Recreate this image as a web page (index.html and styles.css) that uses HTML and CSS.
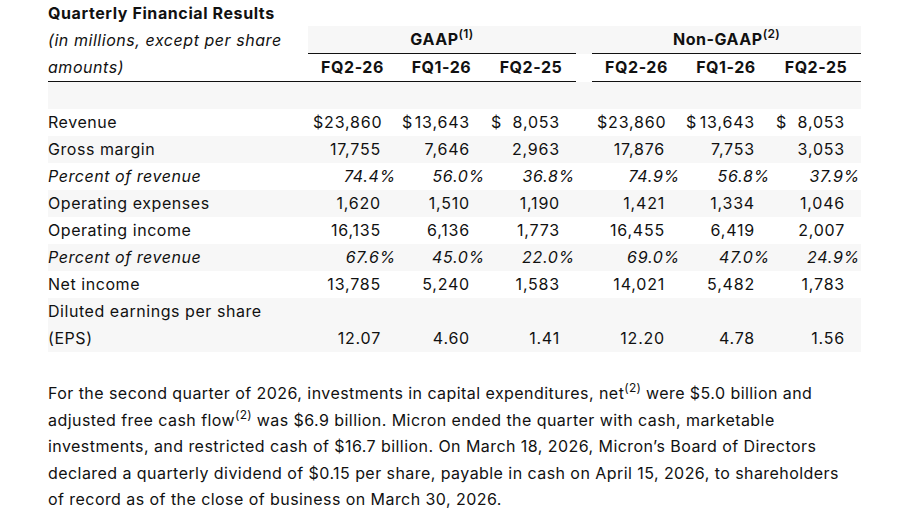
FILE: index.html
```html
<!DOCTYPE html>
<html lang="en">
<head>
<meta charset="utf-8">
<title>Quarterly Financial Results</title>
<link rel="stylesheet" href="styles.css">
</head>
<body>
<main class="page">
  <table class="fin">
    <colgroup>
      <col class="c-label">
      <col class="c-num"><col class="c-num"><col class="c-num2">
      <col class="c-gap">
      <col class="c-num"><col class="c-num2"><col class="c-num2">
    </colgroup>
    <thead>
      <tr class="title-row">
        <th class="title" colspan="8">Quarterly Financial Results</th>
      </tr>
      <tr class="group-row">
        <th class="units" rowspan="2">(in millions, except per share amounts)</th>
        <th class="group" colspan="3">GAAP<sup>(1)</sup></th>
        <th class="gap"></th>
        <th class="group" colspan="3">Non-GAAP<sup>(2)</sup></th>
      </tr>
      <tr class="period-row">
        <th class="period">FQ2-26</th>
        <th class="period">FQ1-26</th>
        <th class="period">FQ2-25</th>
        <th class="gap plain"></th>
        <th class="period">FQ2-26</th>
        <th class="period">FQ1-26</th>
        <th class="period">FQ2-25</th>
      </tr>
    </thead>
    <tbody>
      <tr class="shade spacer-row"><td colspan="8"></td></tr>
      <tr>
        <td class="label">Revenue</td>
        <td class="num dollar"><span class="cur">$</span>23,860</td>
        <td class="num dollar"><span class="cur">$</span>13,643</td>
        <td class="num dollar"><span class="cur">$</span>8,053</td>
        <td class="gap"></td>
        <td class="num dollar"><span class="cur">$</span>23,860</td>
        <td class="num dollar"><span class="cur">$</span>13,643</td>
        <td class="num dollar"><span class="cur">$</span>8,053</td>
      </tr>
      <tr class="shade">
        <td class="label">Gross margin</td>
        <td class="num">17,755</td><td class="num">7,646</td><td class="num">2,963</td>
        <td class="gap"></td>
        <td class="num">17,876</td><td class="num">7,753</td><td class="num">3,053</td>
      </tr>
      <tr class="pct-row">
        <td class="label">Percent of revenue</td>
        <td class="pct">74.4%</td><td class="pct">56.0%</td><td class="pct">36.8%</td>
        <td class="gap"></td>
        <td class="pct">74.9%</td><td class="pct">56.8%</td><td class="pct">37.9%</td>
      </tr>
      <tr class="shade">
        <td class="label">Operating expenses</td>
        <td class="num">1,620</td><td class="num">1,510</td><td class="num">1,190</td>
        <td class="gap"></td>
        <td class="num">1,421</td><td class="num">1,334</td><td class="num">1,046</td>
      </tr>
      <tr>
        <td class="label">Operating income</td>
        <td class="num">16,135</td><td class="num">6,136</td><td class="num">1,773</td>
        <td class="gap"></td>
        <td class="num">16,455</td><td class="num">6,419</td><td class="num">2,007</td>
      </tr>
      <tr class="shade pct-row">
        <td class="label">Percent of revenue</td>
        <td class="pct">67.6%</td><td class="pct">45.0%</td><td class="pct">22.0%</td>
        <td class="gap"></td>
        <td class="pct">69.0%</td><td class="pct">47.0%</td><td class="pct">24.9%</td>
      </tr>
      <tr>
        <td class="label">Net income</td>
        <td class="num">13,785</td><td class="num">5,240</td><td class="num">1,583</td>
        <td class="gap"></td>
        <td class="num">14,021</td><td class="num">5,482</td><td class="num">1,783</td>
      </tr>
      <tr class="shade eps-row">
        <td class="label">Diluted earnings per share (EPS)</td>
        <td class="num">12.07</td><td class="num">4.60</td><td class="num">1.41</td>
        <td class="gap"></td>
        <td class="num">12.20</td><td class="num">4.78</td><td class="num">1.56</td>
      </tr>
    </tbody>
  </table>

  <p class="summary">For the second quarter of 2026, investments in capital expenditures, net<sup>(2)</sup> were $5.0 billion and adjusted free cash flow<sup>(2)</sup> was $6.9 billion. Micron ended the quarter with cash, marketable investments, and restricted cash of $16.7 billion. On March 18, 2026, Micron’s Board of Directors declared a quarterly dividend of $0.15 per share, payable in cash on April 15, 2026, to shareholders of record as of the close of business on March 30, 2026.</p>
</main>
</body>
</html>
```

FILE: styles.css
```css
html, body {
  margin: 0;
  padding: 0;
  background: #ffffff;
}

body {
  font-family: Inter, "Noto Sans", "Liberation Sans", sans-serif;
  font-size: 16px;
  color: #111111;
}

.page {
  padding-left: 48px;
  width: 814px;
}

.fin {
  width: 813px;
  table-layout: fixed;
  border-collapse: collapse;
  border-spacing: 0;
  letter-spacing: 0.55px;
}

.c-label { width: 260px; }
.c-num { width: 89px; }
.c-num2 { width: 90px; }
.c-gap { width: 16px; }

.fin th,
.fin td {
  padding: 0;
  line-height: 27px;
  height: 27px;
  vertical-align: middle;
  white-space: nowrap;
}

.title-row th {
  height: 26px;
  line-height: 26px;
}

.title {
  text-align: left;
  font-weight: 700;
  letter-spacing: 0.6px;
}

.units {
  text-align: left;
  font-style: italic;
  font-weight: 400;
  white-space: normal !important;
  border-bottom: 1px solid #111;
  padding-right: 20px !important;
  vertical-align: top;
}

.group-row .group,
.group-row .gap {
  background: #f7f7f7;
}

.group {
  font-weight: 700;
  text-align: center;
  border-bottom: 1px solid #111;
}

.fin sup {
  font-size: 12px;
  font-weight: 600;
  line-height: 0;
  vertical-align: 7px;
  letter-spacing: 0.3px;
}

.period {
  font-weight: 700;
  text-align: center;
  border-bottom: 1px solid #111;
}

.gap.plain {
  background: #ffffff;
}

.shade td {
  background: #f7f7f7;
}

.label {
  text-align: left;
}

.pct-row td {
  font-style: italic;
}

.num {
  text-align: right;
  padding-right: 16px !important;
  letter-spacing: 0.8px;
}

.cur {
  float: left;
  padding-left: 5px;
}

.pct {
  text-align: right;
  padding-right: 1px !important;
  letter-spacing: 0.7px;
}

.eps-row td {
  vertical-align: bottom;
}

.eps-row .label {
  white-space: normal;
  padding-right: 20px;
}

.summary {
  margin: 28px 0 0;
  width: 804px;
  line-height: 26.5px;
  letter-spacing: 0.44px;
}

.summary sup {
  font-size: 12px;
  line-height: 0;
  vertical-align: 7px;
  letter-spacing: 0.2px;
}
```
